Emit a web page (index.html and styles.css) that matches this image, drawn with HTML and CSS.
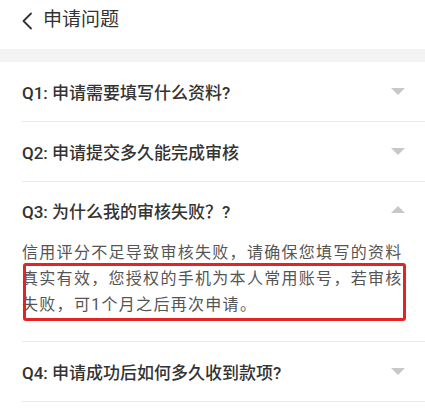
FILE: index.html
```html
<!DOCTYPE html>
<html lang="zh-CN">
<head>
<meta charset="utf-8">
<title>申请问题</title>
<link rel="stylesheet" href="styles.css">
</head>
<body>
<header class="topbar">
  <svg class="back" width="12" height="18" viewBox="0 0 12 18"><polyline points="10,1.5 2.5,9 10,16.5" fill="none" stroke="#333" stroke-width="1.8" stroke-linecap="round" stroke-linejoin="round"/></svg>
  <span class="title">申请问题</span>
</header>
<div class="band"></div>
<ul class="faq">
  <li class="item">
    <div class="q"><span>Q1: 申请需要填写什么资料?</span><i class="tri down"></i></div>
  </li>
  <li class="item">
    <div class="q"><span>Q2: 申请提交多久能完成审核</span><i class="tri down"></i></div>
  </li>
  <li class="item open">
    <div class="q q-open"><span>Q3: 为什么我的审核失败？?</span><i class="tri up"></i></div>
    <div class="answer">信用评分不足导致审核失败，请确保您填写的资料真实有效，您授权的手机为本人常用账号，若审核失败，可1个月之后再次申请。<div class="highlight"></div></div>
  </li>
  <li class="item">
    <div class="q"><span>Q4: 申请成功后如何多久收到款项?</span><i class="tri down"></i></div>
  </li>
</ul>
</body>
</html>
```

FILE: styles.css
```css
html, body {
  margin: 0;
  padding: 0;
  background: #ffffff;
  font-family: Roboto, "Noto Sans CJK SC", sans-serif;
  color: #333333;
}

.topbar {
  box-sizing: border-box;
  height: 49px;
  padding: 0 0 9px 21px;
  display: flex;
  align-items: center;
  gap: 10px;
}

.back {
  display: block;
  margin-top: 2px;
}

.title {
  font-size: 19px;
  line-height: 24px;
  color: #333333;
}

.band {
  height: 13px;
  background: #f3f3f3;
}

.faq {
  list-style: none;
  margin: 0;
  padding: 0 0 0 22px;
}

.item {
  border-bottom: 1px solid #e8e8e8;
}

.q {
  height: 59px;
  display: flex;
  align-items: center;
  justify-content: space-between;
  padding-right: 20px;
  font-size: 17px;
  font-weight: 500;
  color: #333333;
}

.q-open {
  height: 56px;
  padding-bottom: 2px;
}

.tri {
  display: block;
  width: 0;
  height: 0;
  border-left: 7px solid transparent;
  border-right: 7px solid transparent;
}

.tri.down {
  border-top: 7px solid #c8c8c8;
}

.tri.up {
  border-bottom: 7px solid #c8c8c8;
  margin-top: -2px;
}

.answer {
  position: relative;
  padding: 0 14px 23px 0;
  font-size: 16px;
  line-height: 26px;
  letter-spacing: 1.3px;
  color: #555555;
}

.highlight {
  position: absolute;
  left: 1px;
  top: 23px;
  width: 383px;
  height: 58px;
  box-sizing: border-box;
  border: 3px solid #e32424;
  border-radius: 3px;
}
```
